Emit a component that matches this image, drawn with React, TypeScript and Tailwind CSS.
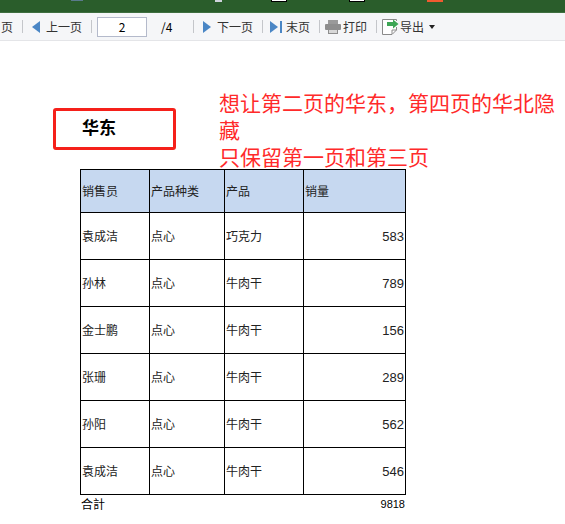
const rows = [
  ["袁成洁", "点心", "巧克力", "583"],
  ["孙林", "点心", "牛肉干", "789"],
  ["金士鹏", "点心", "牛肉干", "156"],
  ["张珊", "点心", "牛肉干", "289"],
  ["孙阳", "点心", "牛肉干", "562"],
  ["袁成洁", "点心", "牛肉干", "546"],
];

const Sep = ({ className }: { className: string }) => (
  <span className={`w-px h-[13px] bg-[#c4c6ca] shrink-0 ${className}`} />
);

const Triangle = ({ left }: { left?: boolean }) => (
  <svg width="8" height="12" viewBox="0 0 8 12" className="shrink-0">
    <path d={left ? "M8 0V12L0 6Z" : "M0 0V12L8 6Z"} fill="#4a86c5" />
  </svg>
);

const Toolbar = () => (
  <div className="h-[28px] bg-[#f5f6f8] border-b border-[#e4e5e8] flex items-center text-[12px] leading-none text-[#333] overflow-hidden">
    <span className="ml-[1px] w-[12px] shrink-0">页</span>
    <Sep className="ml-[9px]" />
    <span className="ml-[9px]"><Triangle left /></span>
    <span className="ml-[6px] w-[36px] shrink-0">上一页</span>
    <Sep className="ml-[9px]" />
    <div className="ml-[5px] w-[50px] h-[20px] shrink-0 bg-white border border-[#b4bacb] flex items-center justify-center text-black">2</div>
    <span className="ml-[14px] w-[12px] shrink-0 text-black">/4</span>
    <Sep className="ml-[20px]" />
    <span className="ml-[9px]"><Triangle /></span>
    <span className="ml-[6px] w-[36px] shrink-0">下一页</span>
    <Sep className="ml-[9px]" />
    <svg width="12" height="12" viewBox="0 0 12 12" className="ml-[7px] shrink-0">
      <path d="M0 0V12L8 6Z" fill="#4a86c5" />
      <rect x="10" y="0" width="2" height="12" fill="#4a86c5" />
    </svg>
    <span className="ml-[4px] w-[24px] shrink-0">末页</span>
    <Sep className="ml-[9px]" />
    <svg width="16" height="14" viewBox="0 0 16 14" className="ml-[5px] shrink-0">
      <rect x="3" y="0" width="10" height="4" fill="#9a9a9a" />
      <rect x="0" y="4" width="16" height="6" rx="1" fill="#8e8e8e" />
      <rect x="3" y="9" width="10" height="5" fill="#8e8e8e" />
      <rect x="4" y="10" width="8" height="3" fill="#d8d8d8" />
    </svg>
    <span className="ml-[2px] w-[24px] shrink-0">打印</span>
    <Sep className="ml-[9px]" />
    <svg width="17" height="16" viewBox="0 0 17 16" className="ml-[5px] shrink-0">
      <path d="M14.5 2V.5H.5V15.5H10L14.5 11V8" fill="white" stroke="#8a8a8a" />
      <path d="M10 15V11H14.5" fill="none" stroke="#8a8a8a" />
      <path d="M5 3H11V0.5L16.5 5L11 9.5V7H5Z" fill="#3da655" />
    </svg>
    <span className="ml-[1px] w-[24px] shrink-0">导出</span>
    <svg width="6" height="4" viewBox="0 0 6 4" className="ml-[5px] shrink-0">
      <path d="M0 0H6L3 4Z" fill="#222" />
    </svg>
  </div>
);

const TitleBar = () => (
  <div className="h-[13px] bg-[#2a5d2b] border-b border-[#3f6f40] flex items-start">
    <span className="ml-[71px] w-[12px] h-[1px] bg-[#5a7a8c]" />
    <span className="ml-[132px] w-[7px] h-[2px] bg-[#cfd3dc]" />
    <span className="ml-[49px] w-[16px] h-[2px] bg-white border-b border-x border-black" />
    <span className="ml-[62px] w-[16px] h-[2px] bg-white border-b border-x border-black" />
    <span className="ml-[62px] w-[16px] h-[2px] bg-[#f05a30]" />
  </div>
);

const cell = "border border-black px-[1px] align-middle font-normal";

export default function App() {
  return (
    <div
      className="w-[565px] h-[524px] bg-white overflow-hidden"
      style={{ fontFamily: '"Noto Sans CJK SC", "Liberation Sans", sans-serif' }}
    >
      <TitleBar />
      <Toolbar />
      <div className="h-[128px] flex">
        <div className="ml-[53px] mt-[67px] w-[123px] h-[42px] border-[3px] border-[#f5201a] rounded-[3px] flex items-center pl-[26px] pb-[6px] text-[17px] leading-none font-bold text-black shrink-0">
          华东
        </div>
        <div className="ml-[43px] mt-[48px] w-[340px] h-[82px] text-[21px] leading-[27px] text-[#ff2a2a] shrink-0">
          想让第二页的华东，第四页的华北隐藏
          <br />
          只保留第一页和第三页
        </div>
      </div>
      <table className="ml-[80px] w-[325px] table-fixed border-collapse text-[12px] leading-none text-[#222]">
        <colgroup>
          <col className="w-[69px]" />
          <col className="w-[75px]" />
          <col className="w-[79px]" />
          <col className="w-[102px]" />
        </colgroup>
        <thead>
          <tr className="h-[43px] bg-[#c6d8f0]">
            <th className={`${cell} text-left`}>销售员</th>
            <th className={`${cell} text-left`}>产品种类</th>
            <th className={`${cell} text-left`}>产品</th>
            <th className={`${cell} text-left`}>销量</th>
          </tr>
        </thead>
        <tbody>
          {rows.map((row, i) => (
            <tr key={i} className="h-[47px]">
              <td className={cell}>{row[0]}</td>
              <td className={cell}>{row[1]}</td>
              <td className={cell}>{row[2]}</td>
              <td className={`${cell} text-right text-[13px]`} style={{ fontFamily: '"Liberation Sans", sans-serif' }}>
                {row[3]}
              </td>
            </tr>
          ))}
        </tbody>
      </table>
      <div className="ml-[81px] w-[324px] h-[18px] flex items-center justify-between text-[12px] leading-none text-black">
        <span>合計</span>
        <span style={{ fontFamily: '"Liberation Sans", sans-serif' }} className="text-[11px]">9818</span>
      </div>
    </div>
  );
}
